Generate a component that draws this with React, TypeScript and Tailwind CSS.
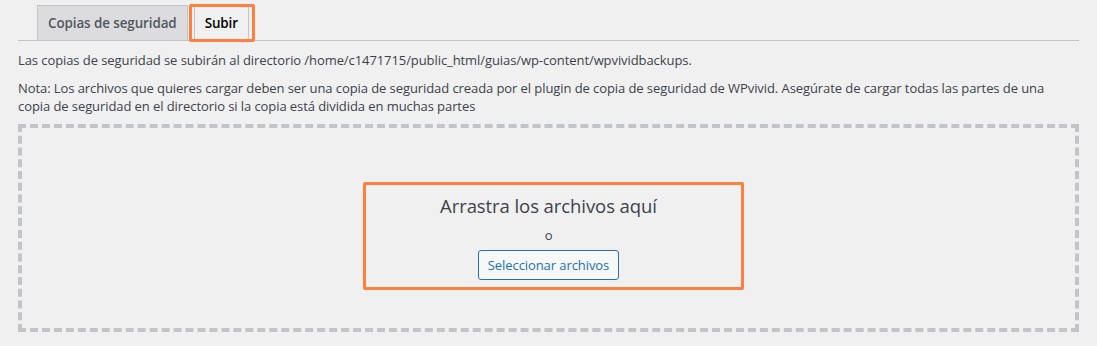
export default function App() {
  return (
    <div className="h-[346px] w-full overflow-hidden bg-[#f0f0f1] px-[18px] font-['Open_Sans',sans-serif] text-[13px] tracking-[-0.08px] text-[#3c434a]">
      <div className="flex border-b border-[#c3c4c7] pt-[5px]">
        <div className="ml-[19px] border border-b-0 border-[#c3c4c7] bg-[#dcdcde] px-[10px] py-[5px] text-[13.4px] leading-[24px] font-semibold text-[#50575e]">
          Copias de seguridad
        </div>
        <div className="relative ml-[6px] -mb-px border border-b-[#f0f0f1] border-[#c3c4c7] bg-[#f0f0f1] px-[10px] py-[5px] text-[13.4px] leading-[24px] font-semibold text-black">
          Subir
          <span className="pointer-events-none absolute -top-[2px] -right-[7px] -bottom-[2px] -left-[6px] rounded-[2px] border-[3px] border-[#ff7f3f]" />
        </div>
      </div>

      <p className="mt-[10px] leading-[18px]">
        Las copias de seguridad se subirán al directorio /home/c1471715/public_html/guias/wp-content/wpvividbackups.
      </p>
      <p className="mt-[10px] leading-[18px]">
        Nota: Los archivos que quieres cargar deben ser una copia de seguridad creada por el plugin de copia de seguridad de WPvivid. Asegúrate de cargar todas las partes de una
        <br />
        copia de seguridad en el directorio si la copia está dividida en muchas partes
      </p>

      <div className="mt-[9px] flex h-[208px] justify-center border-4 border-dashed border-[#c3c4c7] pt-[54px]">
        <div className="ml-[10px] flex h-[108px] w-[381px] flex-col items-center rounded-[2px] border-[3px] border-[#ff7f3f] pr-[10px] pt-[7px]">
          <p className="text-[18.5px] leading-[28px]">Arrastra los archivos aquí</p>
          <p className="mt-[5px] text-[13px] leading-[20px]">o</p>
          <button
            type="button"
            className="mt-[5px] h-[30px] rounded-[3px] border border-[#2271b1] bg-[#f6f7f7] px-[9px] text-[13px] leading-[28px] text-[#2271b1]"
          >
            Seleccionar archivos
          </button>
        </div>
      </div>
    </div>
  );
}
